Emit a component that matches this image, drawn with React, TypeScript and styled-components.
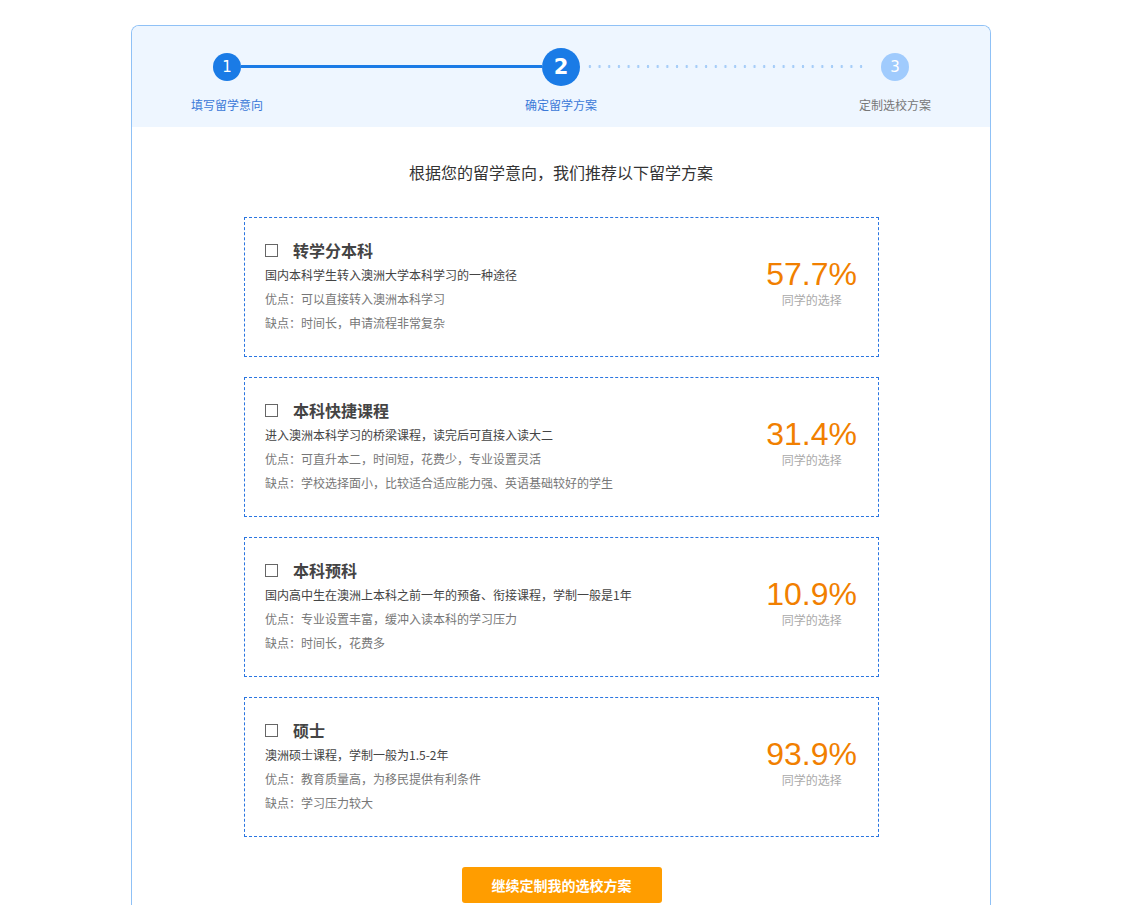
import React from "react";
import styled, { createGlobalStyle } from "styled-components";

const GlobalStyle = createGlobalStyle`
  html, body { margin: 0; padding: 0; background: #fff; }
  body { font-family: "Noto Sans CJK SC", "Microsoft YaHei", sans-serif; color: #333; }
  * { box-sizing: border-box; }
`;

const Page = styled.div`
  padding: 25px 0 0 131px;
`;

const Panel = styled.div`
  width: 860px;
  border: 1px solid #8fc1f6;
  border-bottom: none;
  border-radius: 8px 8px 0 0;
  padding-bottom: 40px;
  overflow: hidden;
`;

const StepsHeader = styled.div`
  background: #eef6ff;
  padding: 22px 81px 14px 81px;
`;

const StepsRow = styled.div`
  display: flex;
  align-items: flex-start;
`;

const Step = styled.div<{ $w: number }>`
  width: ${(p) => p.$w}px;
  display: flex;
  flex-direction: column;
  align-items: center;
  flex: none;
`;

const CircleSlot = styled.div`
  height: 38px;
  display: flex;
  align-items: center;
  justify-content: center;
`;

const Circle = styled.div<{ $size: number; $bg: string; $fs: number; $bold?: boolean }>`
  width: ${(p) => p.$size}px;
  height: ${(p) => p.$size}px;
  border-radius: 50%;
  background: ${(p) => p.$bg};
  color: #fff;
  display: flex;
  align-items: center;
  justify-content: center;
  font-family: "DejaVu Sans", "Noto Sans", sans-serif;
  font-size: ${(p) => p.$fs}px;
  font-weight: ${(p) => (p.$bold ? 600 : 400)};
  line-height: 1;
`;

const StepLabel = styled.div<{ $active?: boolean }>`
  margin-top: 10px;
  white-space: nowrap;
  font-size: 12px;
  line-height: 17px;
  color: ${(p) => (p.$active ? "#3b79d8" : "#777")};
`;

const Connector = styled.div<{ $done?: boolean }>`
  flex: 1 1 0;
  height: 3px;
  margin-top: 17px;
  padding: 0 12px 0 5px;
  ${(p) =>
    p.$done
      ? `background: #1a7be6;`
      : `background-image: radial-gradient(circle, #a6cdf8 1.2px, transparent 1.5px);
         background-size: 9.7px 3px;
         background-repeat: repeat-x;
         background-origin: content-box;
         background-clip: content-box;`}
`;

const Body = styled.div`
  padding-top: 33px;
  display: flex;
  flex-direction: column;
  align-items: center;
`;

const Heading = styled.h2`
  margin: 0 0 33px 0;
  font-size: 16px;
  line-height: 24px;
  font-weight: 400;
  color: #333;
`;

const CardList = styled.div`
  display: flex;
  flex-direction: column;
  gap: 20px;
  width: 635px;
  margin-left: 1px;
`;

const Card = styled.div`
  border: 1px dashed #2a75e0;
  padding: 19px 21px 21px 20px;
  display: flex;
  align-items: center;
  justify-content: space-between;
`;

const CardMain = styled.div`
  display: flex;
  flex-direction: column;
`;

const TitleRow = styled.div`
  display: flex;
  align-items: center;
  height: 26px;
`;

const Checkbox = styled.span`
  width: 13px;
  height: 13px;
  border: 1px solid #666;
  background: #fff;
  margin-right: 15px;
  flex: none;
`;

const CardTitle = styled.div`
  font-size: 16px;
  font-weight: 700;
  color: #444;
  line-height: 26px;
`;

const Line = styled.div<{ $muted?: boolean }>`
  font-size: 12px;
  line-height: 24px;
  color: ${(p) => (p.$muted ? "#777" : "#444")};
`;

const Stat = styled.div`
  display: flex;
  flex-direction: column;
  align-items: center;
  padding-bottom: 11px;
`;

const Percent = styled.div`
  font-family: "Liberation Sans", Arial, sans-serif;
  font-size: 32px;
  line-height: 37px;
  color: #f17f00;
`;

const StatLabel = styled.div`
  font-size: 12px;
  line-height: 13px;
  color: #aaa;
`;

const Button = styled.button`
  margin-top: 30px;
  width: 200px;
  height: 36px;
  border: none;
  border-radius: 3px;
  background: #ff9d00;
  color: #fff;
  font-family: "Noto Sans CJK SC", "Microsoft YaHei", sans-serif;
  font-size: 14px;
  font-weight: 700;
  cursor: pointer;
  margin-left: 1px;
`;

const plans = [
  {
    title: "转学分本科",
    desc: "国内本科学生转入澳洲大学本科学习的一种途径",
    pro: "优点：可以直接转入澳洲本科学习",
    con: "缺点：时间长，申请流程非常复杂",
    pct: "57.7%",
  },
  {
    title: "本科快捷课程",
    desc: "进入澳洲本科学习的桥梁课程，读完后可直接入读大二",
    pro: "优点：可直升本二，时间短，花费少，专业设置灵活",
    con: "缺点：学校选择面小，比较适合适应能力强、英语基础较好的学生",
    pct: "31.4%",
  },
  {
    title: "本科预科",
    desc: "国内高中生在澳洲上本科之前一年的预备、衔接课程，学制一般是1年",
    pro: "优点：专业设置丰富，缓冲入读本科的学习压力",
    con: "缺点：时间长，花费多",
    pct: "10.9%",
  },
  {
    title: "硕士",
    desc: "澳洲硕士课程，学制一般为1.5-2年",
    pro: "优点：教育质量高，为移民提供有利条件",
    con: "缺点：学习压力较大",
    pct: "93.9%",
  },
];

export default function App() {
  return (
    <Page>
      <GlobalStyle />
      <Panel>
        <StepsHeader>
          <StepsRow>
            <Step $w={28}>
              <CircleSlot>
                <Circle $size={28} $bg="#1a7be6" $fs={15}>1</Circle>
              </CircleSlot>
              <StepLabel $active>填写留学意向</StepLabel>
            </Step>
            <Connector $done />
            <Step $w={38}>
              <CircleSlot>
                <Circle $size={38} $bg="#1a7be6" $fs={21} $bold>2</Circle>
              </CircleSlot>
              <StepLabel $active>确定留学方案</StepLabel>
            </Step>
            <Connector />
            <Step $w={28}>
              <CircleSlot>
                <Circle $size={28} $bg="#a0cbfd" $fs={15}>3</Circle>
              </CircleSlot>
              <StepLabel>定制选校方案</StepLabel>
            </Step>
          </StepsRow>
        </StepsHeader>
        <Body>
          <Heading>根据您的留学意向，我们推荐以下留学方案</Heading>
          <CardList>
            {plans.map((p) => (
              <Card key={p.title}>
                <CardMain>
                  <TitleRow>
                    <Checkbox />
                    <CardTitle>{p.title}</CardTitle>
                  </TitleRow>
                  <Line>{p.desc}</Line>
                  <Line $muted>{p.pro}</Line>
                  <Line $muted>{p.con}</Line>
                </CardMain>
                <Stat>
                  <Percent>{p.pct}</Percent>
                  <StatLabel>同学的选择</StatLabel>
                </Stat>
              </Card>
            ))}
          </CardList>
          <Button>继续定制我的选校方案</Button>
        </Body>
      </Panel>
    </Page>
  );
}
